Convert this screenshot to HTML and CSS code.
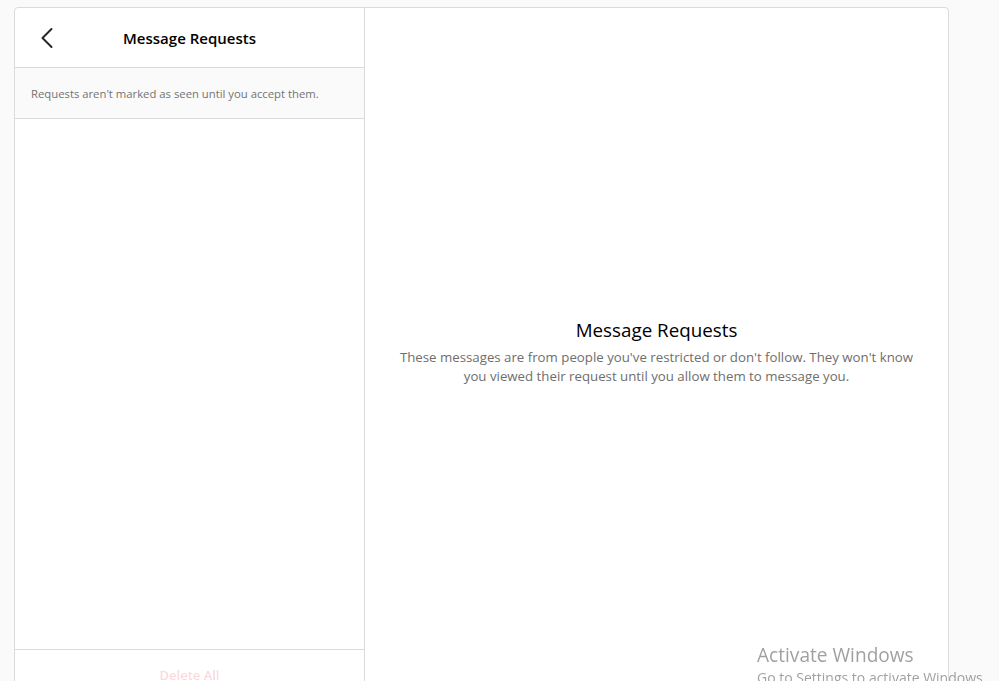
FILE: index.html
```html
<!DOCTYPE html>
<html>
<head>
<meta charset="utf-8">
<link rel="stylesheet" href="styles.css">
</head>
<body>
<div class="card">
  <aside class="side">
    <header class="side-head">
      <button class="back" aria-label="Back">
        <svg width="24" height="24" viewBox="0 0 24 24"><polyline points="16.5 3 7.5 12 16.5 21" fill="none" stroke="#262626" stroke-width="2" stroke-linecap="round" stroke-linejoin="round"/></svg>
      </button>
      <h1 class="side-title">Message Requests</h1>
      <span class="spacer"></span>
    </header>
    <div class="info">Requests aren't marked as seen until you accept them.</div>
    <div class="list"></div>
    <footer class="side-foot"><button class="delete">Delete All</button></footer>
  </aside>
  <main class="main">
    <div class="empty">
      <h2 class="empty-title">Message Requests</h2>
      <p class="empty-text">These messages are from people you've restricted or don't follow. They won't know you viewed their request until you allow them to message you.</p>
    </div>
  </main>
</div>
<div class="watermark">
  <div class="wm-title">Activate Windows</div>
  <div class="wm-sub">Go to Settings to activate Windows.</div>
</div>
</body>
</html>
```
FILE: styles.css
```css
html, body {
  margin: 0;
  padding: 0;
  background: #fafafa;
  overflow: hidden;
  height: 681px;
}
body {
  font-family: "Open Sans", "Noto Sans", sans-serif;
  color: #262626;
}
.card {
  margin: 7px 0 0 14px;
  width: 933px;
  height: 701px;
  border: 1px solid #dbdbdb;
  border-radius: 4px;
  background: #fff;
  display: flex;
}
.side {
  width: 349px;
  border-right: 1px solid #dbdbdb;
  display: flex;
  flex-direction: column;
}
.side-head {
  height: 59px;
  border-bottom: 1px solid #dbdbdb;
  display: flex;
  align-items: center;
  padding: 0 20px;
}
.back {
  width: 24px;
  height: 24px;
  padding: 0;
  border: 0;
  background: none;
  display: flex;
}
.spacer { width: 24px; }
.side-title {
  flex: 1;
  margin: 0;
  text-align: center;
  font-size: 15px;
  font-weight: 600;
  color: #000;
}
.info {
  height: 51px;
  box-sizing: border-box;
  background: #fafafa;
  border-bottom: 1px solid #dbdbdb;
  padding: 0 16px;
  display: flex;
  align-items: center;
  font-size: 11.3px;
  color: #737373;
}
.list { flex: 1; }
.side-foot {
  height: 60px;
  border-top: 1px solid #dbdbdb;
  display: flex;
  justify-content: center;
  padding-top: 15px;
  box-sizing: border-box;
}
.delete {
  border: 0;
  background: none;
  font: 600 13px "Open Sans", "Noto Sans", sans-serif;
  color: rgba(237, 73, 86, 0.22);
  padding: 0;
  height: 20px;
}
.main {
  flex: 1;
  display: flex;
  align-items: center;
  justify-content: center;
}
.empty {
  text-align: center;
  width: 526px;
  margin-top: -14px;
}
.empty-title {
  margin: 0 0 5px;
  font-size: 18.8px;
  line-height: 25px;
  font-weight: 400;
  color: #000;
}
.empty-text {
  margin: 0;
  font-size: 13.25px;
  line-height: 19px;
  color: #6e6e6e;
}
.watermark {
  position: fixed;
  left: 757px;
  top: 642px;
  color: rgba(120, 120, 120, 0.7);
  white-space: nowrap;
}
.wm-title { font-size: 19.1px; line-height: 26px; }
.wm-sub { font-size: 14px; line-height: 20px; }
```
